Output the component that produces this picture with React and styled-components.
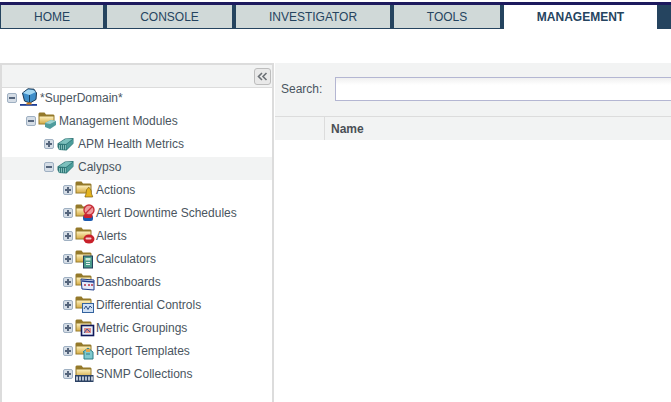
import React from "react";
import styled, { createGlobalStyle } from "styled-components";

const Global = createGlobalStyle`
  html, body { margin: 0; padding: 0; background: #fff; overflow: hidden; }
  body { font-family: "Liberation Sans", Arial, sans-serif; }
`;
const Page = styled.div`width: 671px; height: 402px; overflow: hidden; background: #fff;`;
const Nav = styled.nav`
  margin-top: 2px; height: 27px; display: flex; gap: 4px; box-sizing: border-box;
  background: #25445f; border-top: 3px solid #1d1a5e;
`;
const Tab = styled.div`
  width: ${p => p.$w}px; height: ${p => p.$active ? 24 : 23}px; box-sizing: border-box;
  display: flex; align-items: center; justify-content: center;
  background: ${p => p.$active ? "#fff" : "#d0d9d8"};
  color: #25445f; font-size: 12px; font-weight: ${p => p.$active ? 700 : 400};
  margin-left: ${p => p.$first ? 1 : 0}px;
`;
const Main = styled.div`margin-top: 34px; display: flex; height: 339px;`;
const TreePanel = styled.aside`
  width: 274px; box-sizing: border-box; border-top: 2px solid #dcdcdc; border-left: 2px solid #dcdcdc;
  border-right: 2px solid #dcdcdc; flex: none;
`;
const TreeHead = styled.div`
  height: 23px; box-sizing: border-box; background: #f2f3f3; border-bottom: 1px solid #dcdcdc;
  display: flex; justify-content: flex-end; align-items: flex-start; padding: 3px 1px 0 0;
`;
const Collapse = styled.button`
  width: 17px; height: 17px; padding: 0; box-sizing: border-box; border: 1px solid #bdbdbd; border-radius: 3px;
  background: #e9e9e9; display: flex; align-items: center; justify-content: center;
`;
const Row = styled.div`
  height: 23px; box-sizing: border-box; display: flex; align-items: center; padding: 0 0 4px ${p => p.$indent}px;
  background: ${p => p.$hl ? "#f2f3f3" : "transparent"}; color: #4a5560; font-size: 12px; white-space: nowrap;
`;
const Label = styled.span`margin-left: ${p => p.$gap ?? 1}px;`;
const IconSvg = styled.svg`flex: none; overflow: visible; margin-left: ${p => p.$ml ?? 2}px;`;
const Content = styled.section`flex: 1; min-width: 0; margin-left: 1px;`;
const SearchBar = styled.div`
  height: 54px; background: #f2f3f3; display: flex; align-items: center; padding: 0 0 1px 6px; box-sizing: border-box;
  border-bottom: 1px solid #dcdcdc; font-size: 12px; color: #4a5560;
`;
const SearchInput = styled.div`
  margin-left: 13px; flex: 1; height: 24px; box-sizing: border-box; border: 1px solid #b4b6d2; border-right: none;
  background: linear-gradient(#f0f0f0, #fff 7px);
`;
const TableHead = styled.div`height: 23px; background: #f2f3f3; display: flex; font-size: 12px; font-weight: 700; color: #4a4f55;`;
const ColA = styled.div`width: 49px; border-right: 1px solid #dcdcdc;`;
const ColB = styled.div`padding-left: 6px; display: flex; align-items: center;`;

const Toggle = ({ open }) => (
  <IconSvg $ml={0} width="10" height="10" viewBox="0 0 10 10">
    <rect x=".5" y=".5" width="9" height="9" rx="1.5" fill="#d5dde6" stroke="#9fb0c2" />
    <rect x="2" y="4" width="6" height="2" fill="#55657c" />
    {!open && <rect x="4" y="2" width="2" height="6" fill="#55657c" />}
  </IconSvg>
);
const Cube = () => (
  <IconSvg $ml={3} width="17" height="14" viewBox="0 0 17 14">
    <path d="M0.5 6.5L8 1.5L16.5 1L16.5 6.5L9.5 13.5L2 13L0.5 10Z" fill="#2f7778" />
    <path d="M1.5 6.5L8.5 2L15.5 2L9 7Z" fill="#7cc0bd" />
    <path d="M9.5 7.5L16 2.5V6.5L9.5 12.5Z" fill="#4c9c9a" />
    <path d="M2.5 8v4.5M4.5 8v4.5M6.5 8v4.5M8.5 8v4.5" stroke="#9ad0cc" strokeWidth=".8" />
  </IconSvg>
);
const Folder = ({ children }) => (
  <IconSvg $ml={2} width="20" height="19" viewBox="0 0 20 19">
    <defs>
      <linearGradient id="fold" x1="0" y1="0" x2="0" y2="1">
        <stop offset="0" stopColor="#fdf0bd" />
        <stop offset="1" stopColor="#d6ad48" />
      </linearGradient>
    </defs>
    <path d="M0.5 2.5L1.5 1.5H6.5L8 3.5H15.5L16.5 4.5V13.5H0.5Z" fill="#94792a" />
    <path d="M1.5 5.5H15.5V12.6H1.5Z" fill="url(#fold)" />
    {children}
  </IconSvg>
);
const Globe = () => (
  <IconSvg $ml={3} width="18" height="19" viewBox="0 0 18 19">
    <path d="M2.5 5L8 0.8L14 1.2L16.5 5L16 11.5L10 15L4.5 13Z" fill="#3f8fca" stroke="#1a3550" />
    <path d="M3 5L9.5 7L16 4L13 2L8 1.5Z" fill="#a5d8f2" />
    <path d="M9.5 7V14.5" stroke="#16405f" />
    <rect x="0" y="16" width="17" height="1.8" fill="#1c3d96" />
    <path d="M7 14.5H11L12 16.5H6Z" fill="#d18327" />
  </IconSvg>
);
const overlays = {
  bell: <path d="M10 16C11 15 11.2 13 11.3 11C11.5 9 13 8.5 13 8C13 7.3 14.4 7.3 14.4 8C14.4 8.5 16 9 16.2 11C16.3 13 16.6 15 17.6 16V17H10Z" fill="#e5b41e" stroke="#7a5d10" strokeWidth=".7" />,
  sched: <g><rect x="8" y="12" width="10" height="6" rx="2" fill="#1d5bb0" /><rect x="8.5" y="11" width="9" height="4" rx="2" fill="#d0202c" /><circle cx="14" cy="7" r="5" fill="#ef9b9e" stroke="#c7303a" strokeWidth="1.4" /><path d="M10.5 10.5L17.5 3.5" stroke="#c7303a" strokeWidth="1.2" /></g>,
  alert: <g><ellipse cx="14" cy="13" rx="5.5" ry="4.5" fill="#c8202a" /><rect x="10.5" y="11.5" width="6" height="2" rx="1" fill="#f4c9cb" /></g>,
  calc: <g><rect x="8.5" y="7" width="9" height="12" fill="#4a9a8a" stroke="#24405c" /><rect x="10.5" y="9" width="5" height="2.5" fill="#c9ead9" /><path d="M11 13.5h4M11 15.5h4" stroke="#e4f1ee" /></g>,
  dash: <g><path d="M6 7L19 8V18L7 17Z" fill="#e6ecf9" stroke="#1e3c8c" /><path d="M7 9L19 10" stroke="#1e3c8c" strokeWidth="1.6" /><path d="M9 13h2M13 13h2M16 13h2" stroke="#b5304a" strokeWidth="1.4" /></g>,
  diff: <g><rect x="7.5" y="8.5" width="11" height="9" fill="#cfe0f4" stroke="#34639e" /><path d="M9 14L11 11L13 14.5L15 11L17 13" stroke="#2d4f86" fill="none" /></g>,
  metric: <g><rect x="6.5" y="7.5" width="12" height="10" fill="#e8eef8" stroke="#10185a" strokeWidth="1.6" /><rect x="9" y="10" width="7" height="5" fill="#dd8a86" /><path d="M9 15L12 11L15 14" stroke="#3a5aa0" fill="none" /></g>,
  report: <g><path d="M8 11L13 7L18 11V18H9V11Z" fill="#7fc9cf" stroke="#2f7f88" /><rect x="11" y="8" width="4" height="3" fill="#e0a64f" /><path d="M11 13h4" stroke="#2f7f88" /></g>,
  snmp: <g><rect x="0" y="11" width="18.5" height="7" fill="#2b4163" /><path d="M2 12.5v4M5 12.5v4M8 12.5v4M11 12.5v4M14 12.5v4M17 12.5v4" stroke="#e9eef6" strokeWidth="1.5" /></g>,
};
const children = [
  ["Actions", "bell"], ["Alert Downtime Schedules", "sched"], ["Alerts", "alert"], ["Calculators", "calc"],
  ["Dashboards", "dash"], ["Differential Controls", "diff"], ["Metric Groupings", "metric"], ["Report Templates", "report"], ["SNMP Collections", "snmp"],
];
const tabs = [["HOME", 102], ["CONSOLE", 125], ["INVESTIGATOR", 154], ["TOOLS", 106], ["MANAGEMENT", 153]];

export default function App() {
  return (
    <Page>
      <Global />
      <Nav>
        {tabs.map(([t, w], i) => <Tab key={t} $w={w} $first={i === 0} $active={t === "MANAGEMENT"}>{t}</Tab>)}
      </Nav>
      <Main>
        <TreePanel>
          <TreeHead>
            <Collapse aria-label="Collapse">
              <svg width="11" height="9" viewBox="0 0 11 9"><path d="M5 1L1.5 4.5L5 8M9.5 1L6 4.5L9.5 8" fill="none" stroke="#6b7075" strokeWidth="1.6" /></svg>
            </Collapse>
          </TreeHead>
          <Row $indent={5}><Toggle open /><Globe /><Label $gap={2}>*SuperDomain*</Label></Row>
          <Row $indent={24}><Toggle open /><Folder><path d="M7 12L13 9L18 10V14L12 18L7 16Z" fill="#4f9c9d" /><path d="M7 12L13 9L18 10L12 13Z" fill="#9ed3d0" /></Folder><Label $gap={1}>Management Modules</Label></Row>
          <Row $indent={42}><Toggle /><Cube /><Label $gap={4}>APM Health Metrics</Label></Row>
          <Row $indent={42} $hl><Toggle open /><Cube /><Label $gap={4}>Calypso</Label></Row>
          {children.map(([t, k]) => (
            <Row key={t} $indent={61}><Toggle /><Folder>{overlays[k]}</Folder><Label>{t}</Label></Row>
          ))}
        </TreePanel>
        <Content>
          <SearchBar>Search:<SearchInput /></SearchBar>
          <TableHead><ColA /><ColB>Name</ColB></TableHead>
        </Content>
      </Main>
    </Page>
  );
}
